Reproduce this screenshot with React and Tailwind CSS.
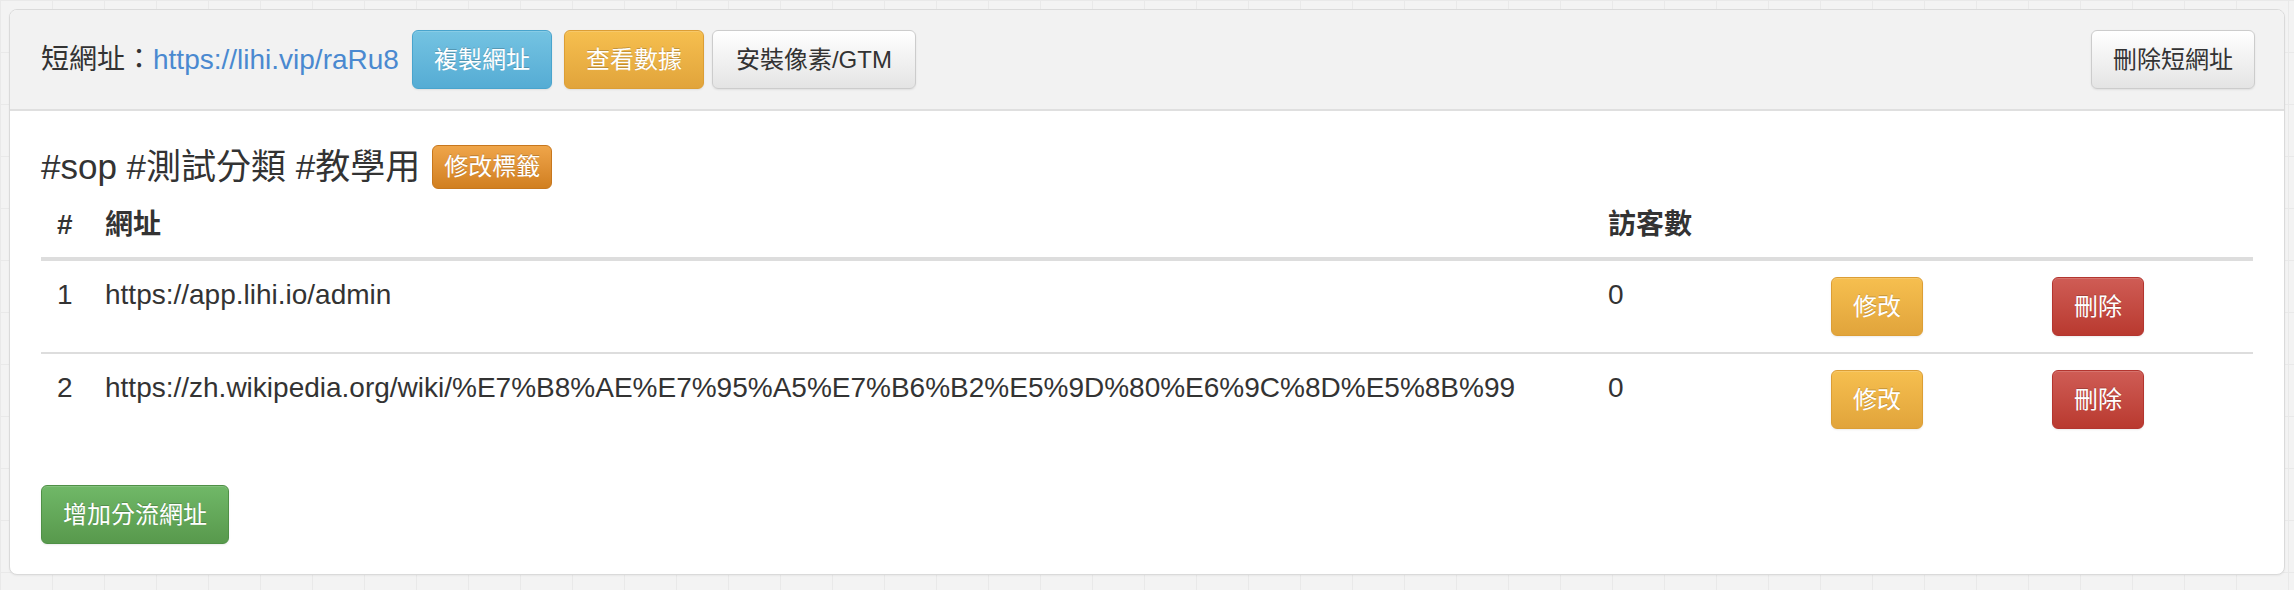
const rows = [
  { id: 1, url: 'https://app.lihi.io/admin', visits: 0 },
  {
    id: 2,
    url: 'https://zh.wikipedia.org/wiki/%E7%B8%AE%E7%95%A5%E7%B6%B2%E5%9D%80%E6%9C%8D%E5%8B%99',
    visits: 0,
  },
];

const btn =
  'inline-flex items-center justify-center h-[59px] px-[21px] text-[24px] rounded-[6px] border bg-linear-to-b shadow-[inset_0_1px_0_rgba(255,255,255,0.15),0_1px_2px_rgba(0,0,0,0.08)] whitespace-nowrap';
const white = '[text-shadow:0_-1px_0_rgba(0,0,0,0.2)] text-white';

export default function App() {
  return (
    <div className="min-h-screen p-[9px] bg-[#f3f3f3] bg-[linear-gradient(90deg,#e9e9e9_1px,transparent_1px),linear-gradient(#e9e9e9_1px,transparent_1px)] bg-[size:52px_52px] font-['Liberation_Sans','Noto_Sans_CJK_TC',sans-serif] text-[#333]">
      <div className="bg-white border border-[#dadada] rounded-[8px] overflow-hidden shadow-[0_1px_2px_rgba(0,0,0,0.05)]">
        {/* Heading */}
        <div className="h-[101px] bg-[#f2f2f2] border-b-2 border-[#dfdfdf] px-[31px] flex items-center justify-between">
          <div className="flex items-center">
            <span className="text-[28px] leading-[40px]">短網址：</span>
            <a className="text-[28px] leading-[40px] text-[#4a89d0]">https://lihi.vip/raRu8</a>
            <button className={`${btn} ${white} ml-[13px] from-[#74c3e2] to-[#55acd4] border-[#49a4cd]`}>
              複製網址
            </button>
            <button className={`${btn} ${white} ml-[12px] from-[#f6bf4f] to-[#e1a43b] border-[#dc9e35]`}>
              查看數據
            </button>
            <button className={`${btn} ml-[8px] px-[23px] from-white to-[#e4e4e4] border-[#cccccc] text-[#333]`}>
              安裝像素/GTM
            </button>
          </div>
          <button className={`${btn} mr-[-2px] from-white to-[#e4e4e4] border-[#cccccc] text-[#333]`}>
            刪除短網址
          </button>
        </div>

        {/* Body */}
        <div className="px-[31px] pt-[33px] pb-[30px]">
          <div className="flex items-center h-[45px]">
            <span className="text-[35px] leading-[44px]">#sop #測試分類 #教學用</span>
            <span className="ml-[12px] h-[44px] px-[11px] inline-flex items-center text-[24px] rounded-[6px] border border-[#c7771d] bg-linear-to-b from-[#efa549] to-[#d17f1f] text-white [text-shadow:0_-1px_0_rgba(0,0,0,0.2)]">
              修改標籤
            </span>
          </div>

          <div className="grid grid-cols-[48px_1fr_223px_221px_217px] text-[28px] leading-[40px]">
            <div className="contents font-bold">
              <div className="px-[16px] pt-[16px] pb-[12px] border-b-4 border-[#dddddd]">#</div>
              <div className="px-[16px] pt-[16px] pb-[12px] border-b-4 border-[#dddddd]">網址</div>
              <div className="px-[16px] pt-[16px] pb-[12px] border-b-4 border-[#dddddd]">訪客數</div>
              <div className="px-[16px] pt-[16px] pb-[12px] border-b-4 border-[#dddddd]"></div>
              <div className="px-[16px] pt-[16px] pb-[12px] border-b-4 border-[#dddddd]"></div>
            </div>
            {rows.map((r, i) => {
              const cell = `px-[16px] py-[16px] ${i > 0 ? 'border-t-2 border-[#dddddd]' : ''}`;
              return (
                <div key={r.id} className="contents">
                  <div className={`${cell} leading-[36px]`}>{r.id}</div>
                  <div className={`${cell} leading-[36px] whitespace-nowrap`}>{r.url}</div>
                  <div className={`${cell} leading-[36px]`}>{r.visits}</div>
                  <div className={cell}>
                    <button className={`${btn} ${white} from-[#f6bf4f] to-[#e1a43b] border-[#dc9e35]`}>修改</button>
                  </div>
                  <div className={cell}>
                    <button className={`${btn} ${white} from-[#cf5c55] to-[#b9392f] border-[#b3352f]`}>刪除</button>
                  </div>
                </div>
              );
            })}
          </div>

          <button className={`${btn} ${white} mt-[40px] from-[#70b868] to-[#58994c] border-[#4f9046]`}>
            增加分流網址
          </button>
        </div>
      </div>
    </div>
  );
}
